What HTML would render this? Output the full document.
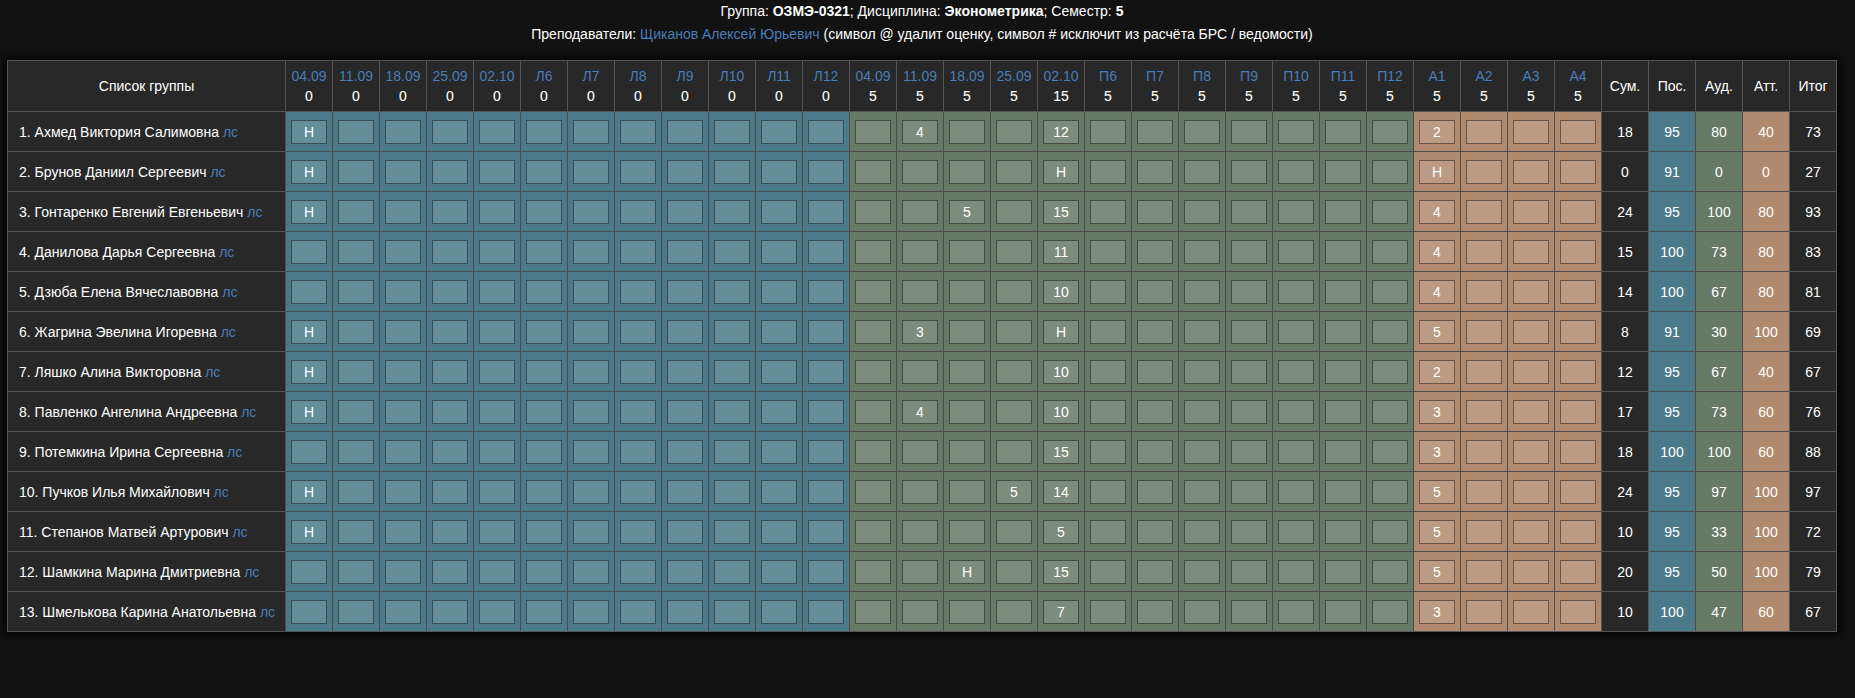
<!DOCTYPE html>
<html><head><meta charset="utf-8"><style>
html,body{margin:0;padding:0;}
body{width:1855px;height:698px;overflow:hidden;background:#121212;font-family:"Liberation Sans",sans-serif;font-size:14px;color:#fff;position:relative;}
.t{position:absolute;left:0;width:1844px;text-align:center;white-space:nowrap;line-height:16px;}
.a{color:#4a7db8;}
.c{position:absolute;box-sizing:border-box;}
.tx{position:absolute;left:0;right:0;text-align:center;line-height:16px;white-space:nowrap;}
.in{position:absolute;box-sizing:border-box;width:36px;height:24px;border:1px solid rgba(0,0,0,0.45);background:rgba(255,255,255,0.15);text-align:center;line-height:22px;}
.hl{position:absolute;}
</style></head><body>

<div class="t" style="top:3px">Группа: <b>ОЗМЭ-0321</b>; Дисциплина: <b>Эконометрика</b>; Семестр: <b>5</b></div>
<div class="t" style="top:26px">Преподаватели: <span class="a">Щиканов Алексей Юрьевич</span> (символ @ удалит оценку, символ # исключит из расчёта БРС / ведомости)</div>
<div class="c" style="left:7px;top:60px;width:1830px;height:572px;background:#282828;box-shadow:0 0 10px 2px #000;"></div>
<div class="c" style="left:285px;top:111px;width:48px;height:521px;background:#4b7b8a"></div>
<div class="c" style="left:332px;top:111px;width:48px;height:521px;background:#4b7b8a"></div>
<div class="c" style="left:379px;top:111px;width:48px;height:521px;background:#4b7b8a"></div>
<div class="c" style="left:426px;top:111px;width:48px;height:521px;background:#4b7b8a"></div>
<div class="c" style="left:473px;top:111px;width:48px;height:521px;background:#4b7b8a"></div>
<div class="c" style="left:520px;top:111px;width:48px;height:521px;background:#4b7b8a"></div>
<div class="c" style="left:567px;top:111px;width:48px;height:521px;background:#4b7b8a"></div>
<div class="c" style="left:614px;top:111px;width:48px;height:521px;background:#4b7b8a"></div>
<div class="c" style="left:661px;top:111px;width:48px;height:521px;background:#4b7b8a"></div>
<div class="c" style="left:708px;top:111px;width:48px;height:521px;background:#4b7b8a"></div>
<div class="c" style="left:755px;top:111px;width:48px;height:521px;background:#4b7b8a"></div>
<div class="c" style="left:802px;top:111px;width:48px;height:521px;background:#4b7b8a"></div>
<div class="c" style="left:849px;top:111px;width:48px;height:521px;background:#667a65"></div>
<div class="c" style="left:896px;top:111px;width:48px;height:521px;background:#667a65"></div>
<div class="c" style="left:943px;top:111px;width:48px;height:521px;background:#667a65"></div>
<div class="c" style="left:990px;top:111px;width:48px;height:521px;background:#667a65"></div>
<div class="c" style="left:1037px;top:111px;width:48px;height:521px;background:#667a65"></div>
<div class="c" style="left:1084px;top:111px;width:48px;height:521px;background:#667a65"></div>
<div class="c" style="left:1131px;top:111px;width:48px;height:521px;background:#667a65"></div>
<div class="c" style="left:1178px;top:111px;width:48px;height:521px;background:#667a65"></div>
<div class="c" style="left:1225px;top:111px;width:48px;height:521px;background:#667a65"></div>
<div class="c" style="left:1272px;top:111px;width:48px;height:521px;background:#667a65"></div>
<div class="c" style="left:1319px;top:111px;width:48px;height:521px;background:#667a65"></div>
<div class="c" style="left:1366px;top:111px;width:48px;height:521px;background:#667a65"></div>
<div class="c" style="left:1413px;top:111px;width:48px;height:521px;background:#b08a6e"></div>
<div class="c" style="left:1460px;top:111px;width:48px;height:521px;background:#b08a6e"></div>
<div class="c" style="left:1507px;top:111px;width:48px;height:521px;background:#b08a6e"></div>
<div class="c" style="left:1554px;top:111px;width:48px;height:521px;background:#b08a6e"></div>
<div class="c" style="left:1601px;top:111px;width:48px;height:521px;background:#282828"></div>
<div class="c" style="left:1648px;top:111px;width:48px;height:521px;background:#4b7b8a"></div>
<div class="c" style="left:1695px;top:111px;width:48px;height:521px;background:#667a65"></div>
<div class="c" style="left:1742px;top:111px;width:48px;height:521px;background:#b08a6e"></div>
<div class="c" style="left:1789px;top:111px;width:48px;height:521px;background:#282828"></div>
<div class="hl" style="left:285px;top:60px;width:1px;height:52px;background:#555555"></div>
<div class="hl" style="left:332px;top:60px;width:1px;height:52px;background:#555555"></div>
<div class="hl" style="left:379px;top:60px;width:1px;height:52px;background:#555555"></div>
<div class="hl" style="left:426px;top:60px;width:1px;height:52px;background:#555555"></div>
<div class="hl" style="left:473px;top:60px;width:1px;height:52px;background:#555555"></div>
<div class="hl" style="left:520px;top:60px;width:1px;height:52px;background:#555555"></div>
<div class="hl" style="left:567px;top:60px;width:1px;height:52px;background:#555555"></div>
<div class="hl" style="left:614px;top:60px;width:1px;height:52px;background:#555555"></div>
<div class="hl" style="left:661px;top:60px;width:1px;height:52px;background:#555555"></div>
<div class="hl" style="left:708px;top:60px;width:1px;height:52px;background:#555555"></div>
<div class="hl" style="left:755px;top:60px;width:1px;height:52px;background:#555555"></div>
<div class="hl" style="left:802px;top:60px;width:1px;height:52px;background:#555555"></div>
<div class="hl" style="left:849px;top:60px;width:1px;height:52px;background:#555555"></div>
<div class="hl" style="left:896px;top:60px;width:1px;height:52px;background:#555555"></div>
<div class="hl" style="left:943px;top:60px;width:1px;height:52px;background:#555555"></div>
<div class="hl" style="left:990px;top:60px;width:1px;height:52px;background:#555555"></div>
<div class="hl" style="left:1037px;top:60px;width:1px;height:52px;background:#555555"></div>
<div class="hl" style="left:1084px;top:60px;width:1px;height:52px;background:#555555"></div>
<div class="hl" style="left:1131px;top:60px;width:1px;height:52px;background:#555555"></div>
<div class="hl" style="left:1178px;top:60px;width:1px;height:52px;background:#555555"></div>
<div class="hl" style="left:1225px;top:60px;width:1px;height:52px;background:#555555"></div>
<div class="hl" style="left:1272px;top:60px;width:1px;height:52px;background:#555555"></div>
<div class="hl" style="left:1319px;top:60px;width:1px;height:52px;background:#555555"></div>
<div class="hl" style="left:1366px;top:60px;width:1px;height:52px;background:#555555"></div>
<div class="hl" style="left:1413px;top:60px;width:1px;height:52px;background:#555555"></div>
<div class="hl" style="left:1460px;top:60px;width:1px;height:52px;background:#555555"></div>
<div class="hl" style="left:1507px;top:60px;width:1px;height:52px;background:#555555"></div>
<div class="hl" style="left:1554px;top:60px;width:1px;height:52px;background:#555555"></div>
<div class="hl" style="left:1601px;top:60px;width:1px;height:52px;background:#555555"></div>
<div class="hl" style="left:1648px;top:60px;width:1px;height:52px;background:#555555"></div>
<div class="hl" style="left:1695px;top:60px;width:1px;height:52px;background:#555555"></div>
<div class="hl" style="left:1742px;top:60px;width:1px;height:52px;background:#555555"></div>
<div class="hl" style="left:1789px;top:60px;width:1px;height:52px;background:#555555"></div>
<div class="hl" style="left:1836px;top:60px;width:1px;height:52px;background:#555555"></div>
<div class="hl" style="left:7px;top:60px;width:1px;height:572px;background:#555555"></div>
<div class="hl" style="left:7px;top:60px;width:1830px;height:1px;background:#555555"></div>
<div class="hl" style="left:7px;top:111px;width:1830px;height:1px;background:#555555"></div>
<div class="hl" style="left:7px;top:631px;width:1830px;height:1px;background:#555555"></div>
<div class="hl" style="left:1836px;top:60px;width:1px;height:572px;background:#555555"></div>
<div class="hl" style="left:7px;top:151px;width:279px;height:1px;background:#555555"></div>
<div class="hl" style="left:7px;top:191px;width:279px;height:1px;background:#555555"></div>
<div class="hl" style="left:7px;top:231px;width:279px;height:1px;background:#555555"></div>
<div class="hl" style="left:7px;top:271px;width:279px;height:1px;background:#555555"></div>
<div class="hl" style="left:7px;top:311px;width:279px;height:1px;background:#555555"></div>
<div class="hl" style="left:7px;top:351px;width:279px;height:1px;background:#555555"></div>
<div class="hl" style="left:7px;top:391px;width:279px;height:1px;background:#555555"></div>
<div class="hl" style="left:7px;top:431px;width:279px;height:1px;background:#555555"></div>
<div class="hl" style="left:7px;top:471px;width:279px;height:1px;background:#555555"></div>
<div class="hl" style="left:7px;top:511px;width:279px;height:1px;background:#555555"></div>
<div class="hl" style="left:7px;top:551px;width:279px;height:1px;background:#555555"></div>
<div class="hl" style="left:7px;top:591px;width:279px;height:1px;background:#555555"></div>
<div class="hl" style="left:285px;top:112px;width:1px;height:519px;background:#505050"></div>
<div class="hl" style="left:286px;top:151px;width:46px;height:1px;background:#4c4c4c"></div>
<div class="hl" style="left:286px;top:191px;width:46px;height:1px;background:#4c4c4c"></div>
<div class="hl" style="left:286px;top:231px;width:46px;height:1px;background:#4c4c4c"></div>
<div class="hl" style="left:286px;top:271px;width:46px;height:1px;background:#4c4c4c"></div>
<div class="hl" style="left:286px;top:311px;width:46px;height:1px;background:#4c4c4c"></div>
<div class="hl" style="left:286px;top:351px;width:46px;height:1px;background:#4c4c4c"></div>
<div class="hl" style="left:286px;top:391px;width:46px;height:1px;background:#4c4c4c"></div>
<div class="hl" style="left:286px;top:431px;width:46px;height:1px;background:#4c4c4c"></div>
<div class="hl" style="left:286px;top:471px;width:46px;height:1px;background:#4c4c4c"></div>
<div class="hl" style="left:286px;top:511px;width:46px;height:1px;background:#4c4c4c"></div>
<div class="hl" style="left:286px;top:551px;width:46px;height:1px;background:#4c4c4c"></div>
<div class="hl" style="left:286px;top:591px;width:46px;height:1px;background:#4c4c4c"></div>
<div class="hl" style="left:333px;top:151px;width:46px;height:1px;background:#4c4c4c"></div>
<div class="hl" style="left:333px;top:191px;width:46px;height:1px;background:#4c4c4c"></div>
<div class="hl" style="left:333px;top:231px;width:46px;height:1px;background:#4c4c4c"></div>
<div class="hl" style="left:333px;top:271px;width:46px;height:1px;background:#4c4c4c"></div>
<div class="hl" style="left:333px;top:311px;width:46px;height:1px;background:#4c4c4c"></div>
<div class="hl" style="left:333px;top:351px;width:46px;height:1px;background:#4c4c4c"></div>
<div class="hl" style="left:333px;top:391px;width:46px;height:1px;background:#4c4c4c"></div>
<div class="hl" style="left:333px;top:431px;width:46px;height:1px;background:#4c4c4c"></div>
<div class="hl" style="left:333px;top:471px;width:46px;height:1px;background:#4c4c4c"></div>
<div class="hl" style="left:333px;top:511px;width:46px;height:1px;background:#4c4c4c"></div>
<div class="hl" style="left:333px;top:551px;width:46px;height:1px;background:#4c4c4c"></div>
<div class="hl" style="left:333px;top:591px;width:46px;height:1px;background:#4c4c4c"></div>
<div class="hl" style="left:380px;top:151px;width:46px;height:1px;background:#4c4c4c"></div>
<div class="hl" style="left:380px;top:191px;width:46px;height:1px;background:#4c4c4c"></div>
<div class="hl" style="left:380px;top:231px;width:46px;height:1px;background:#4c4c4c"></div>
<div class="hl" style="left:380px;top:271px;width:46px;height:1px;background:#4c4c4c"></div>
<div class="hl" style="left:380px;top:311px;width:46px;height:1px;background:#4c4c4c"></div>
<div class="hl" style="left:380px;top:351px;width:46px;height:1px;background:#4c4c4c"></div>
<div class="hl" style="left:380px;top:391px;width:46px;height:1px;background:#4c4c4c"></div>
<div class="hl" style="left:380px;top:431px;width:46px;height:1px;background:#4c4c4c"></div>
<div class="hl" style="left:380px;top:471px;width:46px;height:1px;background:#4c4c4c"></div>
<div class="hl" style="left:380px;top:511px;width:46px;height:1px;background:#4c4c4c"></div>
<div class="hl" style="left:380px;top:551px;width:46px;height:1px;background:#4c4c4c"></div>
<div class="hl" style="left:380px;top:591px;width:46px;height:1px;background:#4c4c4c"></div>
<div class="hl" style="left:427px;top:151px;width:46px;height:1px;background:#4c4c4c"></div>
<div class="hl" style="left:427px;top:191px;width:46px;height:1px;background:#4c4c4c"></div>
<div class="hl" style="left:427px;top:231px;width:46px;height:1px;background:#4c4c4c"></div>
<div class="hl" style="left:427px;top:271px;width:46px;height:1px;background:#4c4c4c"></div>
<div class="hl" style="left:427px;top:311px;width:46px;height:1px;background:#4c4c4c"></div>
<div class="hl" style="left:427px;top:351px;width:46px;height:1px;background:#4c4c4c"></div>
<div class="hl" style="left:427px;top:391px;width:46px;height:1px;background:#4c4c4c"></div>
<div class="hl" style="left:427px;top:431px;width:46px;height:1px;background:#4c4c4c"></div>
<div class="hl" style="left:427px;top:471px;width:46px;height:1px;background:#4c4c4c"></div>
<div class="hl" style="left:427px;top:511px;width:46px;height:1px;background:#4c4c4c"></div>
<div class="hl" style="left:427px;top:551px;width:46px;height:1px;background:#4c4c4c"></div>
<div class="hl" style="left:427px;top:591px;width:46px;height:1px;background:#4c4c4c"></div>
<div class="hl" style="left:474px;top:151px;width:46px;height:1px;background:#4c4c4c"></div>
<div class="hl" style="left:474px;top:191px;width:46px;height:1px;background:#4c4c4c"></div>
<div class="hl" style="left:474px;top:231px;width:46px;height:1px;background:#4c4c4c"></div>
<div class="hl" style="left:474px;top:271px;width:46px;height:1px;background:#4c4c4c"></div>
<div class="hl" style="left:474px;top:311px;width:46px;height:1px;background:#4c4c4c"></div>
<div class="hl" style="left:474px;top:351px;width:46px;height:1px;background:#4c4c4c"></div>
<div class="hl" style="left:474px;top:391px;width:46px;height:1px;background:#4c4c4c"></div>
<div class="hl" style="left:474px;top:431px;width:46px;height:1px;background:#4c4c4c"></div>
<div class="hl" style="left:474px;top:471px;width:46px;height:1px;background:#4c4c4c"></div>
<div class="hl" style="left:474px;top:511px;width:46px;height:1px;background:#4c4c4c"></div>
<div class="hl" style="left:474px;top:551px;width:46px;height:1px;background:#4c4c4c"></div>
<div class="hl" style="left:474px;top:591px;width:46px;height:1px;background:#4c4c4c"></div>
<div class="hl" style="left:521px;top:151px;width:46px;height:1px;background:#4c4c4c"></div>
<div class="hl" style="left:521px;top:191px;width:46px;height:1px;background:#4c4c4c"></div>
<div class="hl" style="left:521px;top:231px;width:46px;height:1px;background:#4c4c4c"></div>
<div class="hl" style="left:521px;top:271px;width:46px;height:1px;background:#4c4c4c"></div>
<div class="hl" style="left:521px;top:311px;width:46px;height:1px;background:#4c4c4c"></div>
<div class="hl" style="left:521px;top:351px;width:46px;height:1px;background:#4c4c4c"></div>
<div class="hl" style="left:521px;top:391px;width:46px;height:1px;background:#4c4c4c"></div>
<div class="hl" style="left:521px;top:431px;width:46px;height:1px;background:#4c4c4c"></div>
<div class="hl" style="left:521px;top:471px;width:46px;height:1px;background:#4c4c4c"></div>
<div class="hl" style="left:521px;top:511px;width:46px;height:1px;background:#4c4c4c"></div>
<div class="hl" style="left:521px;top:551px;width:46px;height:1px;background:#4c4c4c"></div>
<div class="hl" style="left:521px;top:591px;width:46px;height:1px;background:#4c4c4c"></div>
<div class="hl" style="left:568px;top:151px;width:46px;height:1px;background:#4c4c4c"></div>
<div class="hl" style="left:568px;top:191px;width:46px;height:1px;background:#4c4c4c"></div>
<div class="hl" style="left:568px;top:231px;width:46px;height:1px;background:#4c4c4c"></div>
<div class="hl" style="left:568px;top:271px;width:46px;height:1px;background:#4c4c4c"></div>
<div class="hl" style="left:568px;top:311px;width:46px;height:1px;background:#4c4c4c"></div>
<div class="hl" style="left:568px;top:351px;width:46px;height:1px;background:#4c4c4c"></div>
<div class="hl" style="left:568px;top:391px;width:46px;height:1px;background:#4c4c4c"></div>
<div class="hl" style="left:568px;top:431px;width:46px;height:1px;background:#4c4c4c"></div>
<div class="hl" style="left:568px;top:471px;width:46px;height:1px;background:#4c4c4c"></div>
<div class="hl" style="left:568px;top:511px;width:46px;height:1px;background:#4c4c4c"></div>
<div class="hl" style="left:568px;top:551px;width:46px;height:1px;background:#4c4c4c"></div>
<div class="hl" style="left:568px;top:591px;width:46px;height:1px;background:#4c4c4c"></div>
<div class="hl" style="left:615px;top:151px;width:46px;height:1px;background:#4c4c4c"></div>
<div class="hl" style="left:615px;top:191px;width:46px;height:1px;background:#4c4c4c"></div>
<div class="hl" style="left:615px;top:231px;width:46px;height:1px;background:#4c4c4c"></div>
<div class="hl" style="left:615px;top:271px;width:46px;height:1px;background:#4c4c4c"></div>
<div class="hl" style="left:615px;top:311px;width:46px;height:1px;background:#4c4c4c"></div>
<div class="hl" style="left:615px;top:351px;width:46px;height:1px;background:#4c4c4c"></div>
<div class="hl" style="left:615px;top:391px;width:46px;height:1px;background:#4c4c4c"></div>
<div class="hl" style="left:615px;top:431px;width:46px;height:1px;background:#4c4c4c"></div>
<div class="hl" style="left:615px;top:471px;width:46px;height:1px;background:#4c4c4c"></div>
<div class="hl" style="left:615px;top:511px;width:46px;height:1px;background:#4c4c4c"></div>
<div class="hl" style="left:615px;top:551px;width:46px;height:1px;background:#4c4c4c"></div>
<div class="hl" style="left:615px;top:591px;width:46px;height:1px;background:#4c4c4c"></div>
<div class="hl" style="left:662px;top:151px;width:46px;height:1px;background:#4c4c4c"></div>
<div class="hl" style="left:662px;top:191px;width:46px;height:1px;background:#4c4c4c"></div>
<div class="hl" style="left:662px;top:231px;width:46px;height:1px;background:#4c4c4c"></div>
<div class="hl" style="left:662px;top:271px;width:46px;height:1px;background:#4c4c4c"></div>
<div class="hl" style="left:662px;top:311px;width:46px;height:1px;background:#4c4c4c"></div>
<div class="hl" style="left:662px;top:351px;width:46px;height:1px;background:#4c4c4c"></div>
<div class="hl" style="left:662px;top:391px;width:46px;height:1px;background:#4c4c4c"></div>
<div class="hl" style="left:662px;top:431px;width:46px;height:1px;background:#4c4c4c"></div>
<div class="hl" style="left:662px;top:471px;width:46px;height:1px;background:#4c4c4c"></div>
<div class="hl" style="left:662px;top:511px;width:46px;height:1px;background:#4c4c4c"></div>
<div class="hl" style="left:662px;top:551px;width:46px;height:1px;background:#4c4c4c"></div>
<div class="hl" style="left:662px;top:591px;width:46px;height:1px;background:#4c4c4c"></div>
<div class="hl" style="left:709px;top:151px;width:46px;height:1px;background:#4c4c4c"></div>
<div class="hl" style="left:709px;top:191px;width:46px;height:1px;background:#4c4c4c"></div>
<div class="hl" style="left:709px;top:231px;width:46px;height:1px;background:#4c4c4c"></div>
<div class="hl" style="left:709px;top:271px;width:46px;height:1px;background:#4c4c4c"></div>
<div class="hl" style="left:709px;top:311px;width:46px;height:1px;background:#4c4c4c"></div>
<div class="hl" style="left:709px;top:351px;width:46px;height:1px;background:#4c4c4c"></div>
<div class="hl" style="left:709px;top:391px;width:46px;height:1px;background:#4c4c4c"></div>
<div class="hl" style="left:709px;top:431px;width:46px;height:1px;background:#4c4c4c"></div>
<div class="hl" style="left:709px;top:471px;width:46px;height:1px;background:#4c4c4c"></div>
<div class="hl" style="left:709px;top:511px;width:46px;height:1px;background:#4c4c4c"></div>
<div class="hl" style="left:709px;top:551px;width:46px;height:1px;background:#4c4c4c"></div>
<div class="hl" style="left:709px;top:591px;width:46px;height:1px;background:#4c4c4c"></div>
<div class="hl" style="left:756px;top:151px;width:46px;height:1px;background:#4c4c4c"></div>
<div class="hl" style="left:756px;top:191px;width:46px;height:1px;background:#4c4c4c"></div>
<div class="hl" style="left:756px;top:231px;width:46px;height:1px;background:#4c4c4c"></div>
<div class="hl" style="left:756px;top:271px;width:46px;height:1px;background:#4c4c4c"></div>
<div class="hl" style="left:756px;top:311px;width:46px;height:1px;background:#4c4c4c"></div>
<div class="hl" style="left:756px;top:351px;width:46px;height:1px;background:#4c4c4c"></div>
<div class="hl" style="left:756px;top:391px;width:46px;height:1px;background:#4c4c4c"></div>
<div class="hl" style="left:756px;top:431px;width:46px;height:1px;background:#4c4c4c"></div>
<div class="hl" style="left:756px;top:471px;width:46px;height:1px;background:#4c4c4c"></div>
<div class="hl" style="left:756px;top:511px;width:46px;height:1px;background:#4c4c4c"></div>
<div class="hl" style="left:756px;top:551px;width:46px;height:1px;background:#4c4c4c"></div>
<div class="hl" style="left:756px;top:591px;width:46px;height:1px;background:#4c4c4c"></div>
<div class="hl" style="left:803px;top:151px;width:46px;height:1px;background:#4c4c4c"></div>
<div class="hl" style="left:803px;top:191px;width:46px;height:1px;background:#4c4c4c"></div>
<div class="hl" style="left:803px;top:231px;width:46px;height:1px;background:#4c4c4c"></div>
<div class="hl" style="left:803px;top:271px;width:46px;height:1px;background:#4c4c4c"></div>
<div class="hl" style="left:803px;top:311px;width:46px;height:1px;background:#4c4c4c"></div>
<div class="hl" style="left:803px;top:351px;width:46px;height:1px;background:#4c4c4c"></div>
<div class="hl" style="left:803px;top:391px;width:46px;height:1px;background:#4c4c4c"></div>
<div class="hl" style="left:803px;top:431px;width:46px;height:1px;background:#4c4c4c"></div>
<div class="hl" style="left:803px;top:471px;width:46px;height:1px;background:#4c4c4c"></div>
<div class="hl" style="left:803px;top:511px;width:46px;height:1px;background:#4c4c4c"></div>
<div class="hl" style="left:803px;top:551px;width:46px;height:1px;background:#4c4c4c"></div>
<div class="hl" style="left:803px;top:591px;width:46px;height:1px;background:#4c4c4c"></div>
<div class="hl" style="left:850px;top:151px;width:46px;height:1px;background:#4c4c4c"></div>
<div class="hl" style="left:850px;top:191px;width:46px;height:1px;background:#4c4c4c"></div>
<div class="hl" style="left:850px;top:231px;width:46px;height:1px;background:#4c4c4c"></div>
<div class="hl" style="left:850px;top:271px;width:46px;height:1px;background:#4c4c4c"></div>
<div class="hl" style="left:850px;top:311px;width:46px;height:1px;background:#4c4c4c"></div>
<div class="hl" style="left:850px;top:351px;width:46px;height:1px;background:#4c4c4c"></div>
<div class="hl" style="left:850px;top:391px;width:46px;height:1px;background:#4c4c4c"></div>
<div class="hl" style="left:850px;top:431px;width:46px;height:1px;background:#4c4c4c"></div>
<div class="hl" style="left:850px;top:471px;width:46px;height:1px;background:#4c4c4c"></div>
<div class="hl" style="left:850px;top:511px;width:46px;height:1px;background:#4c4c4c"></div>
<div class="hl" style="left:850px;top:551px;width:46px;height:1px;background:#4c4c4c"></div>
<div class="hl" style="left:850px;top:591px;width:46px;height:1px;background:#4c4c4c"></div>
<div class="hl" style="left:897px;top:151px;width:46px;height:1px;background:#4c4c4c"></div>
<div class="hl" style="left:897px;top:191px;width:46px;height:1px;background:#4c4c4c"></div>
<div class="hl" style="left:897px;top:231px;width:46px;height:1px;background:#4c4c4c"></div>
<div class="hl" style="left:897px;top:271px;width:46px;height:1px;background:#4c4c4c"></div>
<div class="hl" style="left:897px;top:311px;width:46px;height:1px;background:#4c4c4c"></div>
<div class="hl" style="left:897px;top:351px;width:46px;height:1px;background:#4c4c4c"></div>
<div class="hl" style="left:897px;top:391px;width:46px;height:1px;background:#4c4c4c"></div>
<div class="hl" style="left:897px;top:431px;width:46px;height:1px;background:#4c4c4c"></div>
<div class="hl" style="left:897px;top:471px;width:46px;height:1px;background:#4c4c4c"></div>
<div class="hl" style="left:897px;top:511px;width:46px;height:1px;background:#4c4c4c"></div>
<div class="hl" style="left:897px;top:551px;width:46px;height:1px;background:#4c4c4c"></div>
<div class="hl" style="left:897px;top:591px;width:46px;height:1px;background:#4c4c4c"></div>
<div class="hl" style="left:944px;top:151px;width:46px;height:1px;background:#4c4c4c"></div>
<div class="hl" style="left:944px;top:191px;width:46px;height:1px;background:#4c4c4c"></div>
<div class="hl" style="left:944px;top:231px;width:46px;height:1px;background:#4c4c4c"></div>
<div class="hl" style="left:944px;top:271px;width:46px;height:1px;background:#4c4c4c"></div>
<div class="hl" style="left:944px;top:311px;width:46px;height:1px;background:#4c4c4c"></div>
<div class="hl" style="left:944px;top:351px;width:46px;height:1px;background:#4c4c4c"></div>
<div class="hl" style="left:944px;top:391px;width:46px;height:1px;background:#4c4c4c"></div>
<div class="hl" style="left:944px;top:431px;width:46px;height:1px;background:#4c4c4c"></div>
<div class="hl" style="left:944px;top:471px;width:46px;height:1px;background:#4c4c4c"></div>
<div class="hl" style="left:944px;top:511px;width:46px;height:1px;background:#4c4c4c"></div>
<div class="hl" style="left:944px;top:551px;width:46px;height:1px;background:#4c4c4c"></div>
<div class="hl" style="left:944px;top:591px;width:46px;height:1px;background:#4c4c4c"></div>
<div class="hl" style="left:991px;top:151px;width:46px;height:1px;background:#4c4c4c"></div>
<div class="hl" style="left:991px;top:191px;width:46px;height:1px;background:#4c4c4c"></div>
<div class="hl" style="left:991px;top:231px;width:46px;height:1px;background:#4c4c4c"></div>
<div class="hl" style="left:991px;top:271px;width:46px;height:1px;background:#4c4c4c"></div>
<div class="hl" style="left:991px;top:311px;width:46px;height:1px;background:#4c4c4c"></div>
<div class="hl" style="left:991px;top:351px;width:46px;height:1px;background:#4c4c4c"></div>
<div class="hl" style="left:991px;top:391px;width:46px;height:1px;background:#4c4c4c"></div>
<div class="hl" style="left:991px;top:431px;width:46px;height:1px;background:#4c4c4c"></div>
<div class="hl" style="left:991px;top:471px;width:46px;height:1px;background:#4c4c4c"></div>
<div class="hl" style="left:991px;top:511px;width:46px;height:1px;background:#4c4c4c"></div>
<div class="hl" style="left:991px;top:551px;width:46px;height:1px;background:#4c4c4c"></div>
<div class="hl" style="left:991px;top:591px;width:46px;height:1px;background:#4c4c4c"></div>
<div class="hl" style="left:1038px;top:151px;width:46px;height:1px;background:#4c4c4c"></div>
<div class="hl" style="left:1038px;top:191px;width:46px;height:1px;background:#4c4c4c"></div>
<div class="hl" style="left:1038px;top:231px;width:46px;height:1px;background:#4c4c4c"></div>
<div class="hl" style="left:1038px;top:271px;width:46px;height:1px;background:#4c4c4c"></div>
<div class="hl" style="left:1038px;top:311px;width:46px;height:1px;background:#4c4c4c"></div>
<div class="hl" style="left:1038px;top:351px;width:46px;height:1px;background:#4c4c4c"></div>
<div class="hl" style="left:1038px;top:391px;width:46px;height:1px;background:#4c4c4c"></div>
<div class="hl" style="left:1038px;top:431px;width:46px;height:1px;background:#4c4c4c"></div>
<div class="hl" style="left:1038px;top:471px;width:46px;height:1px;background:#4c4c4c"></div>
<div class="hl" style="left:1038px;top:511px;width:46px;height:1px;background:#4c4c4c"></div>
<div class="hl" style="left:1038px;top:551px;width:46px;height:1px;background:#4c4c4c"></div>
<div class="hl" style="left:1038px;top:591px;width:46px;height:1px;background:#4c4c4c"></div>
<div class="hl" style="left:1085px;top:151px;width:46px;height:1px;background:#4c4c4c"></div>
<div class="hl" style="left:1085px;top:191px;width:46px;height:1px;background:#4c4c4c"></div>
<div class="hl" style="left:1085px;top:231px;width:46px;height:1px;background:#4c4c4c"></div>
<div class="hl" style="left:1085px;top:271px;width:46px;height:1px;background:#4c4c4c"></div>
<div class="hl" style="left:1085px;top:311px;width:46px;height:1px;background:#4c4c4c"></div>
<div class="hl" style="left:1085px;top:351px;width:46px;height:1px;background:#4c4c4c"></div>
<div class="hl" style="left:1085px;top:391px;width:46px;height:1px;background:#4c4c4c"></div>
<div class="hl" style="left:1085px;top:431px;width:46px;height:1px;background:#4c4c4c"></div>
<div class="hl" style="left:1085px;top:471px;width:46px;height:1px;background:#4c4c4c"></div>
<div class="hl" style="left:1085px;top:511px;width:46px;height:1px;background:#4c4c4c"></div>
<div class="hl" style="left:1085px;top:551px;width:46px;height:1px;background:#4c4c4c"></div>
<div class="hl" style="left:1085px;top:591px;width:46px;height:1px;background:#4c4c4c"></div>
<div class="hl" style="left:1132px;top:151px;width:46px;height:1px;background:#4c4c4c"></div>
<div class="hl" style="left:1132px;top:191px;width:46px;height:1px;background:#4c4c4c"></div>
<div class="hl" style="left:1132px;top:231px;width:46px;height:1px;background:#4c4c4c"></div>
<div class="hl" style="left:1132px;top:271px;width:46px;height:1px;background:#4c4c4c"></div>
<div class="hl" style="left:1132px;top:311px;width:46px;height:1px;background:#4c4c4c"></div>
<div class="hl" style="left:1132px;top:351px;width:46px;height:1px;background:#4c4c4c"></div>
<div class="hl" style="left:1132px;top:391px;width:46px;height:1px;background:#4c4c4c"></div>
<div class="hl" style="left:1132px;top:431px;width:46px;height:1px;background:#4c4c4c"></div>
<div class="hl" style="left:1132px;top:471px;width:46px;height:1px;background:#4c4c4c"></div>
<div class="hl" style="left:1132px;top:511px;width:46px;height:1px;background:#4c4c4c"></div>
<div class="hl" style="left:1132px;top:551px;width:46px;height:1px;background:#4c4c4c"></div>
<div class="hl" style="left:1132px;top:591px;width:46px;height:1px;background:#4c4c4c"></div>
<div class="hl" style="left:1179px;top:151px;width:46px;height:1px;background:#4c4c4c"></div>
<div class="hl" style="left:1179px;top:191px;width:46px;height:1px;background:#4c4c4c"></div>
<div class="hl" style="left:1179px;top:231px;width:46px;height:1px;background:#4c4c4c"></div>
<div class="hl" style="left:1179px;top:271px;width:46px;height:1px;background:#4c4c4c"></div>
<div class="hl" style="left:1179px;top:311px;width:46px;height:1px;background:#4c4c4c"></div>
<div class="hl" style="left:1179px;top:351px;width:46px;height:1px;background:#4c4c4c"></div>
<div class="hl" style="left:1179px;top:391px;width:46px;height:1px;background:#4c4c4c"></div>
<div class="hl" style="left:1179px;top:431px;width:46px;height:1px;background:#4c4c4c"></div>
<div class="hl" style="left:1179px;top:471px;width:46px;height:1px;background:#4c4c4c"></div>
<div class="hl" style="left:1179px;top:511px;width:46px;height:1px;background:#4c4c4c"></div>
<div class="hl" style="left:1179px;top:551px;width:46px;height:1px;background:#4c4c4c"></div>
<div class="hl" style="left:1179px;top:591px;width:46px;height:1px;background:#4c4c4c"></div>
<div class="hl" style="left:1226px;top:151px;width:46px;height:1px;background:#4c4c4c"></div>
<div class="hl" style="left:1226px;top:191px;width:46px;height:1px;background:#4c4c4c"></div>
<div class="hl" style="left:1226px;top:231px;width:46px;height:1px;background:#4c4c4c"></div>
<div class="hl" style="left:1226px;top:271px;width:46px;height:1px;background:#4c4c4c"></div>
<div class="hl" style="left:1226px;top:311px;width:46px;height:1px;background:#4c4c4c"></div>
<div class="hl" style="left:1226px;top:351px;width:46px;height:1px;background:#4c4c4c"></div>
<div class="hl" style="left:1226px;top:391px;width:46px;height:1px;background:#4c4c4c"></div>
<div class="hl" style="left:1226px;top:431px;width:46px;height:1px;background:#4c4c4c"></div>
<div class="hl" style="left:1226px;top:471px;width:46px;height:1px;background:#4c4c4c"></div>
<div class="hl" style="left:1226px;top:511px;width:46px;height:1px;background:#4c4c4c"></div>
<div class="hl" style="left:1226px;top:551px;width:46px;height:1px;background:#4c4c4c"></div>
<div class="hl" style="left:1226px;top:591px;width:46px;height:1px;background:#4c4c4c"></div>
<div class="hl" style="left:1273px;top:151px;width:46px;height:1px;background:#4c4c4c"></div>
<div class="hl" style="left:1273px;top:191px;width:46px;height:1px;background:#4c4c4c"></div>
<div class="hl" style="left:1273px;top:231px;width:46px;height:1px;background:#4c4c4c"></div>
<div class="hl" style="left:1273px;top:271px;width:46px;height:1px;background:#4c4c4c"></div>
<div class="hl" style="left:1273px;top:311px;width:46px;height:1px;background:#4c4c4c"></div>
<div class="hl" style="left:1273px;top:351px;width:46px;height:1px;background:#4c4c4c"></div>
<div class="hl" style="left:1273px;top:391px;width:46px;height:1px;background:#4c4c4c"></div>
<div class="hl" style="left:1273px;top:431px;width:46px;height:1px;background:#4c4c4c"></div>
<div class="hl" style="left:1273px;top:471px;width:46px;height:1px;background:#4c4c4c"></div>
<div class="hl" style="left:1273px;top:511px;width:46px;height:1px;background:#4c4c4c"></div>
<div class="hl" style="left:1273px;top:551px;width:46px;height:1px;background:#4c4c4c"></div>
<div class="hl" style="left:1273px;top:591px;width:46px;height:1px;background:#4c4c4c"></div>
<div class="hl" style="left:1320px;top:151px;width:46px;height:1px;background:#4c4c4c"></div>
<div class="hl" style="left:1320px;top:191px;width:46px;height:1px;background:#4c4c4c"></div>
<div class="hl" style="left:1320px;top:231px;width:46px;height:1px;background:#4c4c4c"></div>
<div class="hl" style="left:1320px;top:271px;width:46px;height:1px;background:#4c4c4c"></div>
<div class="hl" style="left:1320px;top:311px;width:46px;height:1px;background:#4c4c4c"></div>
<div class="hl" style="left:1320px;top:351px;width:46px;height:1px;background:#4c4c4c"></div>
<div class="hl" style="left:1320px;top:391px;width:46px;height:1px;background:#4c4c4c"></div>
<div class="hl" style="left:1320px;top:431px;width:46px;height:1px;background:#4c4c4c"></div>
<div class="hl" style="left:1320px;top:471px;width:46px;height:1px;background:#4c4c4c"></div>
<div class="hl" style="left:1320px;top:511px;width:46px;height:1px;background:#4c4c4c"></div>
<div class="hl" style="left:1320px;top:551px;width:46px;height:1px;background:#4c4c4c"></div>
<div class="hl" style="left:1320px;top:591px;width:46px;height:1px;background:#4c4c4c"></div>
<div class="hl" style="left:1367px;top:151px;width:46px;height:1px;background:#4c4c4c"></div>
<div class="hl" style="left:1367px;top:191px;width:46px;height:1px;background:#4c4c4c"></div>
<div class="hl" style="left:1367px;top:231px;width:46px;height:1px;background:#4c4c4c"></div>
<div class="hl" style="left:1367px;top:271px;width:46px;height:1px;background:#4c4c4c"></div>
<div class="hl" style="left:1367px;top:311px;width:46px;height:1px;background:#4c4c4c"></div>
<div class="hl" style="left:1367px;top:351px;width:46px;height:1px;background:#4c4c4c"></div>
<div class="hl" style="left:1367px;top:391px;width:46px;height:1px;background:#4c4c4c"></div>
<div class="hl" style="left:1367px;top:431px;width:46px;height:1px;background:#4c4c4c"></div>
<div class="hl" style="left:1367px;top:471px;width:46px;height:1px;background:#4c4c4c"></div>
<div class="hl" style="left:1367px;top:511px;width:46px;height:1px;background:#4c4c4c"></div>
<div class="hl" style="left:1367px;top:551px;width:46px;height:1px;background:#4c4c4c"></div>
<div class="hl" style="left:1367px;top:591px;width:46px;height:1px;background:#4c4c4c"></div>
<div class="hl" style="left:1414px;top:151px;width:46px;height:1px;background:#4c4c4c"></div>
<div class="hl" style="left:1414px;top:191px;width:46px;height:1px;background:#4c4c4c"></div>
<div class="hl" style="left:1414px;top:231px;width:46px;height:1px;background:#4c4c4c"></div>
<div class="hl" style="left:1414px;top:271px;width:46px;height:1px;background:#4c4c4c"></div>
<div class="hl" style="left:1414px;top:311px;width:46px;height:1px;background:#4c4c4c"></div>
<div class="hl" style="left:1414px;top:351px;width:46px;height:1px;background:#4c4c4c"></div>
<div class="hl" style="left:1414px;top:391px;width:46px;height:1px;background:#4c4c4c"></div>
<div class="hl" style="left:1414px;top:431px;width:46px;height:1px;background:#4c4c4c"></div>
<div class="hl" style="left:1414px;top:471px;width:46px;height:1px;background:#4c4c4c"></div>
<div class="hl" style="left:1414px;top:511px;width:46px;height:1px;background:#4c4c4c"></div>
<div class="hl" style="left:1414px;top:551px;width:46px;height:1px;background:#4c4c4c"></div>
<div class="hl" style="left:1414px;top:591px;width:46px;height:1px;background:#4c4c4c"></div>
<div class="hl" style="left:1461px;top:151px;width:46px;height:1px;background:#4c4c4c"></div>
<div class="hl" style="left:1461px;top:191px;width:46px;height:1px;background:#4c4c4c"></div>
<div class="hl" style="left:1461px;top:231px;width:46px;height:1px;background:#4c4c4c"></div>
<div class="hl" style="left:1461px;top:271px;width:46px;height:1px;background:#4c4c4c"></div>
<div class="hl" style="left:1461px;top:311px;width:46px;height:1px;background:#4c4c4c"></div>
<div class="hl" style="left:1461px;top:351px;width:46px;height:1px;background:#4c4c4c"></div>
<div class="hl" style="left:1461px;top:391px;width:46px;height:1px;background:#4c4c4c"></div>
<div class="hl" style="left:1461px;top:431px;width:46px;height:1px;background:#4c4c4c"></div>
<div class="hl" style="left:1461px;top:471px;width:46px;height:1px;background:#4c4c4c"></div>
<div class="hl" style="left:1461px;top:511px;width:46px;height:1px;background:#4c4c4c"></div>
<div class="hl" style="left:1461px;top:551px;width:46px;height:1px;background:#4c4c4c"></div>
<div class="hl" style="left:1461px;top:591px;width:46px;height:1px;background:#4c4c4c"></div>
<div class="hl" style="left:1508px;top:151px;width:46px;height:1px;background:#4c4c4c"></div>
<div class="hl" style="left:1508px;top:191px;width:46px;height:1px;background:#4c4c4c"></div>
<div class="hl" style="left:1508px;top:231px;width:46px;height:1px;background:#4c4c4c"></div>
<div class="hl" style="left:1508px;top:271px;width:46px;height:1px;background:#4c4c4c"></div>
<div class="hl" style="left:1508px;top:311px;width:46px;height:1px;background:#4c4c4c"></div>
<div class="hl" style="left:1508px;top:351px;width:46px;height:1px;background:#4c4c4c"></div>
<div class="hl" style="left:1508px;top:391px;width:46px;height:1px;background:#4c4c4c"></div>
<div class="hl" style="left:1508px;top:431px;width:46px;height:1px;background:#4c4c4c"></div>
<div class="hl" style="left:1508px;top:471px;width:46px;height:1px;background:#4c4c4c"></div>
<div class="hl" style="left:1508px;top:511px;width:46px;height:1px;background:#4c4c4c"></div>
<div class="hl" style="left:1508px;top:551px;width:46px;height:1px;background:#4c4c4c"></div>
<div class="hl" style="left:1508px;top:591px;width:46px;height:1px;background:#4c4c4c"></div>
<div class="hl" style="left:1555px;top:151px;width:46px;height:1px;background:#4c4c4c"></div>
<div class="hl" style="left:1555px;top:191px;width:46px;height:1px;background:#4c4c4c"></div>
<div class="hl" style="left:1555px;top:231px;width:46px;height:1px;background:#4c4c4c"></div>
<div class="hl" style="left:1555px;top:271px;width:46px;height:1px;background:#4c4c4c"></div>
<div class="hl" style="left:1555px;top:311px;width:46px;height:1px;background:#4c4c4c"></div>
<div class="hl" style="left:1555px;top:351px;width:46px;height:1px;background:#4c4c4c"></div>
<div class="hl" style="left:1555px;top:391px;width:46px;height:1px;background:#4c4c4c"></div>
<div class="hl" style="left:1555px;top:431px;width:46px;height:1px;background:#4c4c4c"></div>
<div class="hl" style="left:1555px;top:471px;width:46px;height:1px;background:#4c4c4c"></div>
<div class="hl" style="left:1555px;top:511px;width:46px;height:1px;background:#4c4c4c"></div>
<div class="hl" style="left:1555px;top:551px;width:46px;height:1px;background:#4c4c4c"></div>
<div class="hl" style="left:1555px;top:591px;width:46px;height:1px;background:#4c4c4c"></div>
<div class="hl" style="left:1602px;top:151px;width:46px;height:1px;background:#555555"></div>
<div class="hl" style="left:1602px;top:191px;width:46px;height:1px;background:#555555"></div>
<div class="hl" style="left:1602px;top:231px;width:46px;height:1px;background:#555555"></div>
<div class="hl" style="left:1602px;top:271px;width:46px;height:1px;background:#555555"></div>
<div class="hl" style="left:1602px;top:311px;width:46px;height:1px;background:#555555"></div>
<div class="hl" style="left:1602px;top:351px;width:46px;height:1px;background:#555555"></div>
<div class="hl" style="left:1602px;top:391px;width:46px;height:1px;background:#555555"></div>
<div class="hl" style="left:1602px;top:431px;width:46px;height:1px;background:#555555"></div>
<div class="hl" style="left:1602px;top:471px;width:46px;height:1px;background:#555555"></div>
<div class="hl" style="left:1602px;top:511px;width:46px;height:1px;background:#555555"></div>
<div class="hl" style="left:1602px;top:551px;width:46px;height:1px;background:#555555"></div>
<div class="hl" style="left:1602px;top:591px;width:46px;height:1px;background:#555555"></div>
<div class="hl" style="left:1649px;top:151px;width:46px;height:1px;background:#4c4c4c"></div>
<div class="hl" style="left:1649px;top:191px;width:46px;height:1px;background:#4c4c4c"></div>
<div class="hl" style="left:1649px;top:231px;width:46px;height:1px;background:#4c4c4c"></div>
<div class="hl" style="left:1649px;top:271px;width:46px;height:1px;background:#4c4c4c"></div>
<div class="hl" style="left:1649px;top:311px;width:46px;height:1px;background:#4c4c4c"></div>
<div class="hl" style="left:1649px;top:351px;width:46px;height:1px;background:#4c4c4c"></div>
<div class="hl" style="left:1649px;top:391px;width:46px;height:1px;background:#4c4c4c"></div>
<div class="hl" style="left:1649px;top:431px;width:46px;height:1px;background:#4c4c4c"></div>
<div class="hl" style="left:1649px;top:471px;width:46px;height:1px;background:#4c4c4c"></div>
<div class="hl" style="left:1649px;top:511px;width:46px;height:1px;background:#4c4c4c"></div>
<div class="hl" style="left:1649px;top:551px;width:46px;height:1px;background:#4c4c4c"></div>
<div class="hl" style="left:1649px;top:591px;width:46px;height:1px;background:#4c4c4c"></div>
<div class="hl" style="left:1696px;top:151px;width:46px;height:1px;background:#4c4c4c"></div>
<div class="hl" style="left:1696px;top:191px;width:46px;height:1px;background:#4c4c4c"></div>
<div class="hl" style="left:1696px;top:231px;width:46px;height:1px;background:#4c4c4c"></div>
<div class="hl" style="left:1696px;top:271px;width:46px;height:1px;background:#4c4c4c"></div>
<div class="hl" style="left:1696px;top:311px;width:46px;height:1px;background:#4c4c4c"></div>
<div class="hl" style="left:1696px;top:351px;width:46px;height:1px;background:#4c4c4c"></div>
<div class="hl" style="left:1696px;top:391px;width:46px;height:1px;background:#4c4c4c"></div>
<div class="hl" style="left:1696px;top:431px;width:46px;height:1px;background:#4c4c4c"></div>
<div class="hl" style="left:1696px;top:471px;width:46px;height:1px;background:#4c4c4c"></div>
<div class="hl" style="left:1696px;top:511px;width:46px;height:1px;background:#4c4c4c"></div>
<div class="hl" style="left:1696px;top:551px;width:46px;height:1px;background:#4c4c4c"></div>
<div class="hl" style="left:1696px;top:591px;width:46px;height:1px;background:#4c4c4c"></div>
<div class="hl" style="left:1743px;top:151px;width:46px;height:1px;background:#4c4c4c"></div>
<div class="hl" style="left:1743px;top:191px;width:46px;height:1px;background:#4c4c4c"></div>
<div class="hl" style="left:1743px;top:231px;width:46px;height:1px;background:#4c4c4c"></div>
<div class="hl" style="left:1743px;top:271px;width:46px;height:1px;background:#4c4c4c"></div>
<div class="hl" style="left:1743px;top:311px;width:46px;height:1px;background:#4c4c4c"></div>
<div class="hl" style="left:1743px;top:351px;width:46px;height:1px;background:#4c4c4c"></div>
<div class="hl" style="left:1743px;top:391px;width:46px;height:1px;background:#4c4c4c"></div>
<div class="hl" style="left:1743px;top:431px;width:46px;height:1px;background:#4c4c4c"></div>
<div class="hl" style="left:1743px;top:471px;width:46px;height:1px;background:#4c4c4c"></div>
<div class="hl" style="left:1743px;top:511px;width:46px;height:1px;background:#4c4c4c"></div>
<div class="hl" style="left:1743px;top:551px;width:46px;height:1px;background:#4c4c4c"></div>
<div class="hl" style="left:1743px;top:591px;width:46px;height:1px;background:#4c4c4c"></div>
<div class="hl" style="left:1790px;top:151px;width:46px;height:1px;background:#555555"></div>
<div class="hl" style="left:1790px;top:191px;width:46px;height:1px;background:#555555"></div>
<div class="hl" style="left:1790px;top:231px;width:46px;height:1px;background:#555555"></div>
<div class="hl" style="left:1790px;top:271px;width:46px;height:1px;background:#555555"></div>
<div class="hl" style="left:1790px;top:311px;width:46px;height:1px;background:#555555"></div>
<div class="hl" style="left:1790px;top:351px;width:46px;height:1px;background:#555555"></div>
<div class="hl" style="left:1790px;top:391px;width:46px;height:1px;background:#555555"></div>
<div class="hl" style="left:1790px;top:431px;width:46px;height:1px;background:#555555"></div>
<div class="hl" style="left:1790px;top:471px;width:46px;height:1px;background:#555555"></div>
<div class="hl" style="left:1790px;top:511px;width:46px;height:1px;background:#555555"></div>
<div class="hl" style="left:1790px;top:551px;width:46px;height:1px;background:#555555"></div>
<div class="hl" style="left:1790px;top:591px;width:46px;height:1px;background:#555555"></div>
<div class="hl" style="left:332px;top:112px;width:1px;height:519px;background:#4c4c4c"></div>
<div class="hl" style="left:379px;top:112px;width:1px;height:519px;background:#4c4c4c"></div>
<div class="hl" style="left:426px;top:112px;width:1px;height:519px;background:#4c4c4c"></div>
<div class="hl" style="left:473px;top:112px;width:1px;height:519px;background:#4c4c4c"></div>
<div class="hl" style="left:520px;top:112px;width:1px;height:519px;background:#4c4c4c"></div>
<div class="hl" style="left:567px;top:112px;width:1px;height:519px;background:#4c4c4c"></div>
<div class="hl" style="left:614px;top:112px;width:1px;height:519px;background:#4c4c4c"></div>
<div class="hl" style="left:661px;top:112px;width:1px;height:519px;background:#4c4c4c"></div>
<div class="hl" style="left:708px;top:112px;width:1px;height:519px;background:#4c4c4c"></div>
<div class="hl" style="left:755px;top:112px;width:1px;height:519px;background:#4c4c4c"></div>
<div class="hl" style="left:802px;top:112px;width:1px;height:519px;background:#4c4c4c"></div>
<div class="hl" style="left:849px;top:112px;width:1px;height:519px;background:#4c4c4c"></div>
<div class="hl" style="left:896px;top:112px;width:1px;height:519px;background:#4c4c4c"></div>
<div class="hl" style="left:943px;top:112px;width:1px;height:519px;background:#4c4c4c"></div>
<div class="hl" style="left:990px;top:112px;width:1px;height:519px;background:#4c4c4c"></div>
<div class="hl" style="left:1037px;top:112px;width:1px;height:519px;background:#4c4c4c"></div>
<div class="hl" style="left:1084px;top:112px;width:1px;height:519px;background:#4c4c4c"></div>
<div class="hl" style="left:1131px;top:112px;width:1px;height:519px;background:#4c4c4c"></div>
<div class="hl" style="left:1178px;top:112px;width:1px;height:519px;background:#4c4c4c"></div>
<div class="hl" style="left:1225px;top:112px;width:1px;height:519px;background:#4c4c4c"></div>
<div class="hl" style="left:1272px;top:112px;width:1px;height:519px;background:#4c4c4c"></div>
<div class="hl" style="left:1319px;top:112px;width:1px;height:519px;background:#4c4c4c"></div>
<div class="hl" style="left:1366px;top:112px;width:1px;height:519px;background:#4c4c4c"></div>
<div class="hl" style="left:1413px;top:112px;width:1px;height:519px;background:#4c4c4c"></div>
<div class="hl" style="left:1460px;top:112px;width:1px;height:519px;background:#4c4c4c"></div>
<div class="hl" style="left:1507px;top:112px;width:1px;height:519px;background:#4c4c4c"></div>
<div class="hl" style="left:1554px;top:112px;width:1px;height:519px;background:#4c4c4c"></div>
<div class="hl" style="left:1601px;top:112px;width:1px;height:519px;background:#555555"></div>
<div class="hl" style="left:1648px;top:112px;width:1px;height:519px;background:#555555"></div>
<div class="hl" style="left:1695px;top:112px;width:1px;height:519px;background:#4c4c4c"></div>
<div class="hl" style="left:1742px;top:112px;width:1px;height:519px;background:#4c4c4c"></div>
<div class="hl" style="left:1789px;top:112px;width:1px;height:519px;background:#555555"></div>
<div class="tx" style="left:8px;width:277px;right:auto;top:78px">Список группы</div>
<div class="tx a" style="left:286px;width:46px;right:auto;top:68px">04.09</div>
<div class="tx" style="left:286px;width:46px;right:auto;top:88px;-webkit-text-stroke:0.1px #fff">0</div>
<div class="tx a" style="left:333px;width:46px;right:auto;top:68px">11.09</div>
<div class="tx" style="left:333px;width:46px;right:auto;top:88px;-webkit-text-stroke:0.1px #fff">0</div>
<div class="tx a" style="left:380px;width:46px;right:auto;top:68px">18.09</div>
<div class="tx" style="left:380px;width:46px;right:auto;top:88px;-webkit-text-stroke:0.1px #fff">0</div>
<div class="tx a" style="left:427px;width:46px;right:auto;top:68px">25.09</div>
<div class="tx" style="left:427px;width:46px;right:auto;top:88px;-webkit-text-stroke:0.1px #fff">0</div>
<div class="tx a" style="left:474px;width:46px;right:auto;top:68px">02.10</div>
<div class="tx" style="left:474px;width:46px;right:auto;top:88px;-webkit-text-stroke:0.1px #fff">0</div>
<div class="tx a" style="left:521px;width:46px;right:auto;top:68px">Л6</div>
<div class="tx" style="left:521px;width:46px;right:auto;top:88px;-webkit-text-stroke:0.1px #fff">0</div>
<div class="tx a" style="left:568px;width:46px;right:auto;top:68px">Л7</div>
<div class="tx" style="left:568px;width:46px;right:auto;top:88px;-webkit-text-stroke:0.1px #fff">0</div>
<div class="tx a" style="left:615px;width:46px;right:auto;top:68px">Л8</div>
<div class="tx" style="left:615px;width:46px;right:auto;top:88px;-webkit-text-stroke:0.1px #fff">0</div>
<div class="tx a" style="left:662px;width:46px;right:auto;top:68px">Л9</div>
<div class="tx" style="left:662px;width:46px;right:auto;top:88px;-webkit-text-stroke:0.1px #fff">0</div>
<div class="tx a" style="left:709px;width:46px;right:auto;top:68px">Л10</div>
<div class="tx" style="left:709px;width:46px;right:auto;top:88px;-webkit-text-stroke:0.1px #fff">0</div>
<div class="tx a" style="left:756px;width:46px;right:auto;top:68px">Л11</div>
<div class="tx" style="left:756px;width:46px;right:auto;top:88px;-webkit-text-stroke:0.1px #fff">0</div>
<div class="tx a" style="left:803px;width:46px;right:auto;top:68px">Л12</div>
<div class="tx" style="left:803px;width:46px;right:auto;top:88px;-webkit-text-stroke:0.1px #fff">0</div>
<div class="tx a" style="left:850px;width:46px;right:auto;top:68px">04.09</div>
<div class="tx" style="left:850px;width:46px;right:auto;top:88px;-webkit-text-stroke:0.1px #fff">5</div>
<div class="tx a" style="left:897px;width:46px;right:auto;top:68px">11.09</div>
<div class="tx" style="left:897px;width:46px;right:auto;top:88px;-webkit-text-stroke:0.1px #fff">5</div>
<div class="tx a" style="left:944px;width:46px;right:auto;top:68px">18.09</div>
<div class="tx" style="left:944px;width:46px;right:auto;top:88px;-webkit-text-stroke:0.1px #fff">5</div>
<div class="tx a" style="left:991px;width:46px;right:auto;top:68px">25.09</div>
<div class="tx" style="left:991px;width:46px;right:auto;top:88px;-webkit-text-stroke:0.1px #fff">5</div>
<div class="tx a" style="left:1038px;width:46px;right:auto;top:68px">02.10</div>
<div class="tx" style="left:1038px;width:46px;right:auto;top:88px;-webkit-text-stroke:0.1px #fff">15</div>
<div class="tx a" style="left:1085px;width:46px;right:auto;top:68px">П6</div>
<div class="tx" style="left:1085px;width:46px;right:auto;top:88px;-webkit-text-stroke:0.1px #fff">5</div>
<div class="tx a" style="left:1132px;width:46px;right:auto;top:68px">П7</div>
<div class="tx" style="left:1132px;width:46px;right:auto;top:88px;-webkit-text-stroke:0.1px #fff">5</div>
<div class="tx a" style="left:1179px;width:46px;right:auto;top:68px">П8</div>
<div class="tx" style="left:1179px;width:46px;right:auto;top:88px;-webkit-text-stroke:0.1px #fff">5</div>
<div class="tx a" style="left:1226px;width:46px;right:auto;top:68px">П9</div>
<div class="tx" style="left:1226px;width:46px;right:auto;top:88px;-webkit-text-stroke:0.1px #fff">5</div>
<div class="tx a" style="left:1273px;width:46px;right:auto;top:68px">П10</div>
<div class="tx" style="left:1273px;width:46px;right:auto;top:88px;-webkit-text-stroke:0.1px #fff">5</div>
<div class="tx a" style="left:1320px;width:46px;right:auto;top:68px">П11</div>
<div class="tx" style="left:1320px;width:46px;right:auto;top:88px;-webkit-text-stroke:0.1px #fff">5</div>
<div class="tx a" style="left:1367px;width:46px;right:auto;top:68px">П12</div>
<div class="tx" style="left:1367px;width:46px;right:auto;top:88px;-webkit-text-stroke:0.1px #fff">5</div>
<div class="tx a" style="left:1414px;width:46px;right:auto;top:68px">А1</div>
<div class="tx" style="left:1414px;width:46px;right:auto;top:88px;-webkit-text-stroke:0.1px #fff">5</div>
<div class="tx a" style="left:1461px;width:46px;right:auto;top:68px">А2</div>
<div class="tx" style="left:1461px;width:46px;right:auto;top:88px;-webkit-text-stroke:0.1px #fff">5</div>
<div class="tx a" style="left:1508px;width:46px;right:auto;top:68px">А3</div>
<div class="tx" style="left:1508px;width:46px;right:auto;top:88px;-webkit-text-stroke:0.1px #fff">5</div>
<div class="tx a" style="left:1555px;width:46px;right:auto;top:68px">А4</div>
<div class="tx" style="left:1555px;width:46px;right:auto;top:88px;-webkit-text-stroke:0.1px #fff">5</div>
<div class="tx" style="left:1602px;width:46px;right:auto;top:78px">Сум.</div>
<div class="tx" style="left:1649px;width:46px;right:auto;top:78px">Пос.</div>
<div class="tx" style="left:1696px;width:46px;right:auto;top:78px">Ауд.</div>
<div class="tx" style="left:1743px;width:46px;right:auto;top:78px">Атт.</div>
<div class="tx" style="left:1790px;width:46px;right:auto;top:78px">Итог</div>
<div class="tx" style="left:19px;right:auto;text-align:left;top:124px">1. Ахмед Виктория Салимовна <span class="a">лс</span></div>
<div class="in" style="left:291px;top:120px">Н</div>
<div class="in" style="left:338px;top:120px"></div>
<div class="in" style="left:385px;top:120px"></div>
<div class="in" style="left:432px;top:120px"></div>
<div class="in" style="left:479px;top:120px"></div>
<div class="in" style="left:526px;top:120px"></div>
<div class="in" style="left:573px;top:120px"></div>
<div class="in" style="left:620px;top:120px"></div>
<div class="in" style="left:667px;top:120px"></div>
<div class="in" style="left:714px;top:120px"></div>
<div class="in" style="left:761px;top:120px"></div>
<div class="in" style="left:808px;top:120px"></div>
<div class="in" style="left:855px;top:120px"></div>
<div class="in" style="left:902px;top:120px">4</div>
<div class="in" style="left:949px;top:120px"></div>
<div class="in" style="left:996px;top:120px"></div>
<div class="in" style="left:1043px;top:120px">12</div>
<div class="in" style="left:1090px;top:120px"></div>
<div class="in" style="left:1137px;top:120px"></div>
<div class="in" style="left:1184px;top:120px"></div>
<div class="in" style="left:1231px;top:120px"></div>
<div class="in" style="left:1278px;top:120px"></div>
<div class="in" style="left:1325px;top:120px"></div>
<div class="in" style="left:1372px;top:120px"></div>
<div class="in" style="left:1419px;top:120px">2</div>
<div class="in" style="left:1466px;top:120px"></div>
<div class="in" style="left:1513px;top:120px"></div>
<div class="in" style="left:1560px;top:120px"></div>
<div class="tx" style="left:1602px;width:46px;right:auto;top:124px">18</div>
<div class="tx" style="left:1649px;width:46px;right:auto;top:124px">95</div>
<div class="tx" style="left:1696px;width:46px;right:auto;top:124px">80</div>
<div class="tx" style="left:1743px;width:46px;right:auto;top:124px">40</div>
<div class="tx" style="left:1790px;width:46px;right:auto;top:124px">73</div>
<div class="tx" style="left:19px;right:auto;text-align:left;top:164px">2. Брунов Даниил Сергеевич <span class="a">лс</span></div>
<div class="in" style="left:291px;top:160px">Н</div>
<div class="in" style="left:338px;top:160px"></div>
<div class="in" style="left:385px;top:160px"></div>
<div class="in" style="left:432px;top:160px"></div>
<div class="in" style="left:479px;top:160px"></div>
<div class="in" style="left:526px;top:160px"></div>
<div class="in" style="left:573px;top:160px"></div>
<div class="in" style="left:620px;top:160px"></div>
<div class="in" style="left:667px;top:160px"></div>
<div class="in" style="left:714px;top:160px"></div>
<div class="in" style="left:761px;top:160px"></div>
<div class="in" style="left:808px;top:160px"></div>
<div class="in" style="left:855px;top:160px"></div>
<div class="in" style="left:902px;top:160px"></div>
<div class="in" style="left:949px;top:160px"></div>
<div class="in" style="left:996px;top:160px"></div>
<div class="in" style="left:1043px;top:160px">Н</div>
<div class="in" style="left:1090px;top:160px"></div>
<div class="in" style="left:1137px;top:160px"></div>
<div class="in" style="left:1184px;top:160px"></div>
<div class="in" style="left:1231px;top:160px"></div>
<div class="in" style="left:1278px;top:160px"></div>
<div class="in" style="left:1325px;top:160px"></div>
<div class="in" style="left:1372px;top:160px"></div>
<div class="in" style="left:1419px;top:160px">Н</div>
<div class="in" style="left:1466px;top:160px"></div>
<div class="in" style="left:1513px;top:160px"></div>
<div class="in" style="left:1560px;top:160px"></div>
<div class="tx" style="left:1602px;width:46px;right:auto;top:164px">0</div>
<div class="tx" style="left:1649px;width:46px;right:auto;top:164px">91</div>
<div class="tx" style="left:1696px;width:46px;right:auto;top:164px">0</div>
<div class="tx" style="left:1743px;width:46px;right:auto;top:164px">0</div>
<div class="tx" style="left:1790px;width:46px;right:auto;top:164px">27</div>
<div class="tx" style="left:19px;right:auto;text-align:left;top:204px">3. Гонтаренко Евгений Евгеньевич <span class="a">лс</span></div>
<div class="in" style="left:291px;top:200px">Н</div>
<div class="in" style="left:338px;top:200px"></div>
<div class="in" style="left:385px;top:200px"></div>
<div class="in" style="left:432px;top:200px"></div>
<div class="in" style="left:479px;top:200px"></div>
<div class="in" style="left:526px;top:200px"></div>
<div class="in" style="left:573px;top:200px"></div>
<div class="in" style="left:620px;top:200px"></div>
<div class="in" style="left:667px;top:200px"></div>
<div class="in" style="left:714px;top:200px"></div>
<div class="in" style="left:761px;top:200px"></div>
<div class="in" style="left:808px;top:200px"></div>
<div class="in" style="left:855px;top:200px"></div>
<div class="in" style="left:902px;top:200px"></div>
<div class="in" style="left:949px;top:200px">5</div>
<div class="in" style="left:996px;top:200px"></div>
<div class="in" style="left:1043px;top:200px">15</div>
<div class="in" style="left:1090px;top:200px"></div>
<div class="in" style="left:1137px;top:200px"></div>
<div class="in" style="left:1184px;top:200px"></div>
<div class="in" style="left:1231px;top:200px"></div>
<div class="in" style="left:1278px;top:200px"></div>
<div class="in" style="left:1325px;top:200px"></div>
<div class="in" style="left:1372px;top:200px"></div>
<div class="in" style="left:1419px;top:200px">4</div>
<div class="in" style="left:1466px;top:200px"></div>
<div class="in" style="left:1513px;top:200px"></div>
<div class="in" style="left:1560px;top:200px"></div>
<div class="tx" style="left:1602px;width:46px;right:auto;top:204px">24</div>
<div class="tx" style="left:1649px;width:46px;right:auto;top:204px">95</div>
<div class="tx" style="left:1696px;width:46px;right:auto;top:204px">100</div>
<div class="tx" style="left:1743px;width:46px;right:auto;top:204px">80</div>
<div class="tx" style="left:1790px;width:46px;right:auto;top:204px">93</div>
<div class="tx" style="left:19px;right:auto;text-align:left;top:244px">4. Данилова Дарья Сергеевна <span class="a">лс</span></div>
<div class="in" style="left:291px;top:240px"></div>
<div class="in" style="left:338px;top:240px"></div>
<div class="in" style="left:385px;top:240px"></div>
<div class="in" style="left:432px;top:240px"></div>
<div class="in" style="left:479px;top:240px"></div>
<div class="in" style="left:526px;top:240px"></div>
<div class="in" style="left:573px;top:240px"></div>
<div class="in" style="left:620px;top:240px"></div>
<div class="in" style="left:667px;top:240px"></div>
<div class="in" style="left:714px;top:240px"></div>
<div class="in" style="left:761px;top:240px"></div>
<div class="in" style="left:808px;top:240px"></div>
<div class="in" style="left:855px;top:240px"></div>
<div class="in" style="left:902px;top:240px"></div>
<div class="in" style="left:949px;top:240px"></div>
<div class="in" style="left:996px;top:240px"></div>
<div class="in" style="left:1043px;top:240px">11</div>
<div class="in" style="left:1090px;top:240px"></div>
<div class="in" style="left:1137px;top:240px"></div>
<div class="in" style="left:1184px;top:240px"></div>
<div class="in" style="left:1231px;top:240px"></div>
<div class="in" style="left:1278px;top:240px"></div>
<div class="in" style="left:1325px;top:240px"></div>
<div class="in" style="left:1372px;top:240px"></div>
<div class="in" style="left:1419px;top:240px">4</div>
<div class="in" style="left:1466px;top:240px"></div>
<div class="in" style="left:1513px;top:240px"></div>
<div class="in" style="left:1560px;top:240px"></div>
<div class="tx" style="left:1602px;width:46px;right:auto;top:244px">15</div>
<div class="tx" style="left:1649px;width:46px;right:auto;top:244px">100</div>
<div class="tx" style="left:1696px;width:46px;right:auto;top:244px">73</div>
<div class="tx" style="left:1743px;width:46px;right:auto;top:244px">80</div>
<div class="tx" style="left:1790px;width:46px;right:auto;top:244px">83</div>
<div class="tx" style="left:19px;right:auto;text-align:left;top:284px">5. Дзюба Елена Вячеславовна <span class="a">лс</span></div>
<div class="in" style="left:291px;top:280px"></div>
<div class="in" style="left:338px;top:280px"></div>
<div class="in" style="left:385px;top:280px"></div>
<div class="in" style="left:432px;top:280px"></div>
<div class="in" style="left:479px;top:280px"></div>
<div class="in" style="left:526px;top:280px"></div>
<div class="in" style="left:573px;top:280px"></div>
<div class="in" style="left:620px;top:280px"></div>
<div class="in" style="left:667px;top:280px"></div>
<div class="in" style="left:714px;top:280px"></div>
<div class="in" style="left:761px;top:280px"></div>
<div class="in" style="left:808px;top:280px"></div>
<div class="in" style="left:855px;top:280px"></div>
<div class="in" style="left:902px;top:280px"></div>
<div class="in" style="left:949px;top:280px"></div>
<div class="in" style="left:996px;top:280px"></div>
<div class="in" style="left:1043px;top:280px">10</div>
<div class="in" style="left:1090px;top:280px"></div>
<div class="in" style="left:1137px;top:280px"></div>
<div class="in" style="left:1184px;top:280px"></div>
<div class="in" style="left:1231px;top:280px"></div>
<div class="in" style="left:1278px;top:280px"></div>
<div class="in" style="left:1325px;top:280px"></div>
<div class="in" style="left:1372px;top:280px"></div>
<div class="in" style="left:1419px;top:280px">4</div>
<div class="in" style="left:1466px;top:280px"></div>
<div class="in" style="left:1513px;top:280px"></div>
<div class="in" style="left:1560px;top:280px"></div>
<div class="tx" style="left:1602px;width:46px;right:auto;top:284px">14</div>
<div class="tx" style="left:1649px;width:46px;right:auto;top:284px">100</div>
<div class="tx" style="left:1696px;width:46px;right:auto;top:284px">67</div>
<div class="tx" style="left:1743px;width:46px;right:auto;top:284px">80</div>
<div class="tx" style="left:1790px;width:46px;right:auto;top:284px">81</div>
<div class="tx" style="left:19px;right:auto;text-align:left;top:324px">6. Жагрина Эвелина Игоревна <span class="a">лс</span></div>
<div class="in" style="left:291px;top:320px">Н</div>
<div class="in" style="left:338px;top:320px"></div>
<div class="in" style="left:385px;top:320px"></div>
<div class="in" style="left:432px;top:320px"></div>
<div class="in" style="left:479px;top:320px"></div>
<div class="in" style="left:526px;top:320px"></div>
<div class="in" style="left:573px;top:320px"></div>
<div class="in" style="left:620px;top:320px"></div>
<div class="in" style="left:667px;top:320px"></div>
<div class="in" style="left:714px;top:320px"></div>
<div class="in" style="left:761px;top:320px"></div>
<div class="in" style="left:808px;top:320px"></div>
<div class="in" style="left:855px;top:320px"></div>
<div class="in" style="left:902px;top:320px">3</div>
<div class="in" style="left:949px;top:320px"></div>
<div class="in" style="left:996px;top:320px"></div>
<div class="in" style="left:1043px;top:320px">Н</div>
<div class="in" style="left:1090px;top:320px"></div>
<div class="in" style="left:1137px;top:320px"></div>
<div class="in" style="left:1184px;top:320px"></div>
<div class="in" style="left:1231px;top:320px"></div>
<div class="in" style="left:1278px;top:320px"></div>
<div class="in" style="left:1325px;top:320px"></div>
<div class="in" style="left:1372px;top:320px"></div>
<div class="in" style="left:1419px;top:320px">5</div>
<div class="in" style="left:1466px;top:320px"></div>
<div class="in" style="left:1513px;top:320px"></div>
<div class="in" style="left:1560px;top:320px"></div>
<div class="tx" style="left:1602px;width:46px;right:auto;top:324px">8</div>
<div class="tx" style="left:1649px;width:46px;right:auto;top:324px">91</div>
<div class="tx" style="left:1696px;width:46px;right:auto;top:324px">30</div>
<div class="tx" style="left:1743px;width:46px;right:auto;top:324px">100</div>
<div class="tx" style="left:1790px;width:46px;right:auto;top:324px">69</div>
<div class="tx" style="left:19px;right:auto;text-align:left;top:364px">7. Ляшко Алина Викторовна <span class="a">лс</span></div>
<div class="in" style="left:291px;top:360px">Н</div>
<div class="in" style="left:338px;top:360px"></div>
<div class="in" style="left:385px;top:360px"></div>
<div class="in" style="left:432px;top:360px"></div>
<div class="in" style="left:479px;top:360px"></div>
<div class="in" style="left:526px;top:360px"></div>
<div class="in" style="left:573px;top:360px"></div>
<div class="in" style="left:620px;top:360px"></div>
<div class="in" style="left:667px;top:360px"></div>
<div class="in" style="left:714px;top:360px"></div>
<div class="in" style="left:761px;top:360px"></div>
<div class="in" style="left:808px;top:360px"></div>
<div class="in" style="left:855px;top:360px"></div>
<div class="in" style="left:902px;top:360px"></div>
<div class="in" style="left:949px;top:360px"></div>
<div class="in" style="left:996px;top:360px"></div>
<div class="in" style="left:1043px;top:360px">10</div>
<div class="in" style="left:1090px;top:360px"></div>
<div class="in" style="left:1137px;top:360px"></div>
<div class="in" style="left:1184px;top:360px"></div>
<div class="in" style="left:1231px;top:360px"></div>
<div class="in" style="left:1278px;top:360px"></div>
<div class="in" style="left:1325px;top:360px"></div>
<div class="in" style="left:1372px;top:360px"></div>
<div class="in" style="left:1419px;top:360px">2</div>
<div class="in" style="left:1466px;top:360px"></div>
<div class="in" style="left:1513px;top:360px"></div>
<div class="in" style="left:1560px;top:360px"></div>
<div class="tx" style="left:1602px;width:46px;right:auto;top:364px">12</div>
<div class="tx" style="left:1649px;width:46px;right:auto;top:364px">95</div>
<div class="tx" style="left:1696px;width:46px;right:auto;top:364px">67</div>
<div class="tx" style="left:1743px;width:46px;right:auto;top:364px">40</div>
<div class="tx" style="left:1790px;width:46px;right:auto;top:364px">67</div>
<div class="tx" style="left:19px;right:auto;text-align:left;top:404px">8. Павленко Ангелина Андреевна <span class="a">лс</span></div>
<div class="in" style="left:291px;top:400px">Н</div>
<div class="in" style="left:338px;top:400px"></div>
<div class="in" style="left:385px;top:400px"></div>
<div class="in" style="left:432px;top:400px"></div>
<div class="in" style="left:479px;top:400px"></div>
<div class="in" style="left:526px;top:400px"></div>
<div class="in" style="left:573px;top:400px"></div>
<div class="in" style="left:620px;top:400px"></div>
<div class="in" style="left:667px;top:400px"></div>
<div class="in" style="left:714px;top:400px"></div>
<div class="in" style="left:761px;top:400px"></div>
<div class="in" style="left:808px;top:400px"></div>
<div class="in" style="left:855px;top:400px"></div>
<div class="in" style="left:902px;top:400px">4</div>
<div class="in" style="left:949px;top:400px"></div>
<div class="in" style="left:996px;top:400px"></div>
<div class="in" style="left:1043px;top:400px">10</div>
<div class="in" style="left:1090px;top:400px"></div>
<div class="in" style="left:1137px;top:400px"></div>
<div class="in" style="left:1184px;top:400px"></div>
<div class="in" style="left:1231px;top:400px"></div>
<div class="in" style="left:1278px;top:400px"></div>
<div class="in" style="left:1325px;top:400px"></div>
<div class="in" style="left:1372px;top:400px"></div>
<div class="in" style="left:1419px;top:400px">3</div>
<div class="in" style="left:1466px;top:400px"></div>
<div class="in" style="left:1513px;top:400px"></div>
<div class="in" style="left:1560px;top:400px"></div>
<div class="tx" style="left:1602px;width:46px;right:auto;top:404px">17</div>
<div class="tx" style="left:1649px;width:46px;right:auto;top:404px">95</div>
<div class="tx" style="left:1696px;width:46px;right:auto;top:404px">73</div>
<div class="tx" style="left:1743px;width:46px;right:auto;top:404px">60</div>
<div class="tx" style="left:1790px;width:46px;right:auto;top:404px">76</div>
<div class="tx" style="left:19px;right:auto;text-align:left;top:444px">9. Потемкина Ирина Сергеевна <span class="a">лс</span></div>
<div class="in" style="left:291px;top:440px"></div>
<div class="in" style="left:338px;top:440px"></div>
<div class="in" style="left:385px;top:440px"></div>
<div class="in" style="left:432px;top:440px"></div>
<div class="in" style="left:479px;top:440px"></div>
<div class="in" style="left:526px;top:440px"></div>
<div class="in" style="left:573px;top:440px"></div>
<div class="in" style="left:620px;top:440px"></div>
<div class="in" style="left:667px;top:440px"></div>
<div class="in" style="left:714px;top:440px"></div>
<div class="in" style="left:761px;top:440px"></div>
<div class="in" style="left:808px;top:440px"></div>
<div class="in" style="left:855px;top:440px"></div>
<div class="in" style="left:902px;top:440px"></div>
<div class="in" style="left:949px;top:440px"></div>
<div class="in" style="left:996px;top:440px"></div>
<div class="in" style="left:1043px;top:440px">15</div>
<div class="in" style="left:1090px;top:440px"></div>
<div class="in" style="left:1137px;top:440px"></div>
<div class="in" style="left:1184px;top:440px"></div>
<div class="in" style="left:1231px;top:440px"></div>
<div class="in" style="left:1278px;top:440px"></div>
<div class="in" style="left:1325px;top:440px"></div>
<div class="in" style="left:1372px;top:440px"></div>
<div class="in" style="left:1419px;top:440px">3</div>
<div class="in" style="left:1466px;top:440px"></div>
<div class="in" style="left:1513px;top:440px"></div>
<div class="in" style="left:1560px;top:440px"></div>
<div class="tx" style="left:1602px;width:46px;right:auto;top:444px">18</div>
<div class="tx" style="left:1649px;width:46px;right:auto;top:444px">100</div>
<div class="tx" style="left:1696px;width:46px;right:auto;top:444px">100</div>
<div class="tx" style="left:1743px;width:46px;right:auto;top:444px">60</div>
<div class="tx" style="left:1790px;width:46px;right:auto;top:444px">88</div>
<div class="tx" style="left:19px;right:auto;text-align:left;top:484px">10. Пучков Илья Михайлович <span class="a">лс</span></div>
<div class="in" style="left:291px;top:480px">Н</div>
<div class="in" style="left:338px;top:480px"></div>
<div class="in" style="left:385px;top:480px"></div>
<div class="in" style="left:432px;top:480px"></div>
<div class="in" style="left:479px;top:480px"></div>
<div class="in" style="left:526px;top:480px"></div>
<div class="in" style="left:573px;top:480px"></div>
<div class="in" style="left:620px;top:480px"></div>
<div class="in" style="left:667px;top:480px"></div>
<div class="in" style="left:714px;top:480px"></div>
<div class="in" style="left:761px;top:480px"></div>
<div class="in" style="left:808px;top:480px"></div>
<div class="in" style="left:855px;top:480px"></div>
<div class="in" style="left:902px;top:480px"></div>
<div class="in" style="left:949px;top:480px"></div>
<div class="in" style="left:996px;top:480px">5</div>
<div class="in" style="left:1043px;top:480px">14</div>
<div class="in" style="left:1090px;top:480px"></div>
<div class="in" style="left:1137px;top:480px"></div>
<div class="in" style="left:1184px;top:480px"></div>
<div class="in" style="left:1231px;top:480px"></div>
<div class="in" style="left:1278px;top:480px"></div>
<div class="in" style="left:1325px;top:480px"></div>
<div class="in" style="left:1372px;top:480px"></div>
<div class="in" style="left:1419px;top:480px">5</div>
<div class="in" style="left:1466px;top:480px"></div>
<div class="in" style="left:1513px;top:480px"></div>
<div class="in" style="left:1560px;top:480px"></div>
<div class="tx" style="left:1602px;width:46px;right:auto;top:484px">24</div>
<div class="tx" style="left:1649px;width:46px;right:auto;top:484px">95</div>
<div class="tx" style="left:1696px;width:46px;right:auto;top:484px">97</div>
<div class="tx" style="left:1743px;width:46px;right:auto;top:484px">100</div>
<div class="tx" style="left:1790px;width:46px;right:auto;top:484px">97</div>
<div class="tx" style="left:19px;right:auto;text-align:left;top:524px">11. Степанов Матвей Артурович <span class="a">лс</span></div>
<div class="in" style="left:291px;top:520px">Н</div>
<div class="in" style="left:338px;top:520px"></div>
<div class="in" style="left:385px;top:520px"></div>
<div class="in" style="left:432px;top:520px"></div>
<div class="in" style="left:479px;top:520px"></div>
<div class="in" style="left:526px;top:520px"></div>
<div class="in" style="left:573px;top:520px"></div>
<div class="in" style="left:620px;top:520px"></div>
<div class="in" style="left:667px;top:520px"></div>
<div class="in" style="left:714px;top:520px"></div>
<div class="in" style="left:761px;top:520px"></div>
<div class="in" style="left:808px;top:520px"></div>
<div class="in" style="left:855px;top:520px"></div>
<div class="in" style="left:902px;top:520px"></div>
<div class="in" style="left:949px;top:520px"></div>
<div class="in" style="left:996px;top:520px"></div>
<div class="in" style="left:1043px;top:520px">5</div>
<div class="in" style="left:1090px;top:520px"></div>
<div class="in" style="left:1137px;top:520px"></div>
<div class="in" style="left:1184px;top:520px"></div>
<div class="in" style="left:1231px;top:520px"></div>
<div class="in" style="left:1278px;top:520px"></div>
<div class="in" style="left:1325px;top:520px"></div>
<div class="in" style="left:1372px;top:520px"></div>
<div class="in" style="left:1419px;top:520px">5</div>
<div class="in" style="left:1466px;top:520px"></div>
<div class="in" style="left:1513px;top:520px"></div>
<div class="in" style="left:1560px;top:520px"></div>
<div class="tx" style="left:1602px;width:46px;right:auto;top:524px">10</div>
<div class="tx" style="left:1649px;width:46px;right:auto;top:524px">95</div>
<div class="tx" style="left:1696px;width:46px;right:auto;top:524px">33</div>
<div class="tx" style="left:1743px;width:46px;right:auto;top:524px">100</div>
<div class="tx" style="left:1790px;width:46px;right:auto;top:524px">72</div>
<div class="tx" style="left:19px;right:auto;text-align:left;top:564px">12. Шамкина Марина Дмитриевна <span class="a">лс</span></div>
<div class="in" style="left:291px;top:560px"></div>
<div class="in" style="left:338px;top:560px"></div>
<div class="in" style="left:385px;top:560px"></div>
<div class="in" style="left:432px;top:560px"></div>
<div class="in" style="left:479px;top:560px"></div>
<div class="in" style="left:526px;top:560px"></div>
<div class="in" style="left:573px;top:560px"></div>
<div class="in" style="left:620px;top:560px"></div>
<div class="in" style="left:667px;top:560px"></div>
<div class="in" style="left:714px;top:560px"></div>
<div class="in" style="left:761px;top:560px"></div>
<div class="in" style="left:808px;top:560px"></div>
<div class="in" style="left:855px;top:560px"></div>
<div class="in" style="left:902px;top:560px"></div>
<div class="in" style="left:949px;top:560px">Н</div>
<div class="in" style="left:996px;top:560px"></div>
<div class="in" style="left:1043px;top:560px">15</div>
<div class="in" style="left:1090px;top:560px"></div>
<div class="in" style="left:1137px;top:560px"></div>
<div class="in" style="left:1184px;top:560px"></div>
<div class="in" style="left:1231px;top:560px"></div>
<div class="in" style="left:1278px;top:560px"></div>
<div class="in" style="left:1325px;top:560px"></div>
<div class="in" style="left:1372px;top:560px"></div>
<div class="in" style="left:1419px;top:560px">5</div>
<div class="in" style="left:1466px;top:560px"></div>
<div class="in" style="left:1513px;top:560px"></div>
<div class="in" style="left:1560px;top:560px"></div>
<div class="tx" style="left:1602px;width:46px;right:auto;top:564px">20</div>
<div class="tx" style="left:1649px;width:46px;right:auto;top:564px">95</div>
<div class="tx" style="left:1696px;width:46px;right:auto;top:564px">50</div>
<div class="tx" style="left:1743px;width:46px;right:auto;top:564px">100</div>
<div class="tx" style="left:1790px;width:46px;right:auto;top:564px">79</div>
<div class="tx" style="left:19px;right:auto;text-align:left;top:604px">13. Шмелькова Карина Анатольевна <span class="a">лс</span></div>
<div class="in" style="left:291px;top:600px"></div>
<div class="in" style="left:338px;top:600px"></div>
<div class="in" style="left:385px;top:600px"></div>
<div class="in" style="left:432px;top:600px"></div>
<div class="in" style="left:479px;top:600px"></div>
<div class="in" style="left:526px;top:600px"></div>
<div class="in" style="left:573px;top:600px"></div>
<div class="in" style="left:620px;top:600px"></div>
<div class="in" style="left:667px;top:600px"></div>
<div class="in" style="left:714px;top:600px"></div>
<div class="in" style="left:761px;top:600px"></div>
<div class="in" style="left:808px;top:600px"></div>
<div class="in" style="left:855px;top:600px"></div>
<div class="in" style="left:902px;top:600px"></div>
<div class="in" style="left:949px;top:600px"></div>
<div class="in" style="left:996px;top:600px"></div>
<div class="in" style="left:1043px;top:600px">7</div>
<div class="in" style="left:1090px;top:600px"></div>
<div class="in" style="left:1137px;top:600px"></div>
<div class="in" style="left:1184px;top:600px"></div>
<div class="in" style="left:1231px;top:600px"></div>
<div class="in" style="left:1278px;top:600px"></div>
<div class="in" style="left:1325px;top:600px"></div>
<div class="in" style="left:1372px;top:600px"></div>
<div class="in" style="left:1419px;top:600px">3</div>
<div class="in" style="left:1466px;top:600px"></div>
<div class="in" style="left:1513px;top:600px"></div>
<div class="in" style="left:1560px;top:600px"></div>
<div class="tx" style="left:1602px;width:46px;right:auto;top:604px">10</div>
<div class="tx" style="left:1649px;width:46px;right:auto;top:604px">100</div>
<div class="tx" style="left:1696px;width:46px;right:auto;top:604px">47</div>
<div class="tx" style="left:1743px;width:46px;right:auto;top:604px">60</div>
<div class="tx" style="left:1790px;width:46px;right:auto;top:604px">67</div>
</body></html>
